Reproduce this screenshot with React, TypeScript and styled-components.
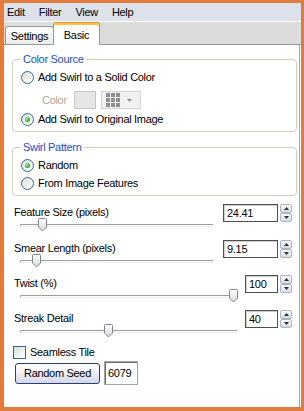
import React, { FC } from 'react';
import styled, { createGlobalStyle, css } from 'styled-components';

const GlobalStyle = createGlobalStyle`
  html, body {
    margin: 0;
    padding: 0;
  }
  body {
    background: #e27b3c;
    font-family: "Liberation Sans", Arial, sans-serif;
    font-size: 11px;
    letter-spacing: -0.3px;
    color: #000;
  }
`;

const Frame = styled.div`
  width: 304px;
  height: 411px;
  box-sizing: border-box;
  padding: 3px 3px 4px 4px;
  background: #e27b3c;
  display: flex;
`;

const Window = styled.div`
  flex: 1;
  display: flex;
  flex-direction: column;
  background: #fff;
`;

const MenuBar = styled.div`
  height: 18px;
  display: flex;
  align-items: center;
  gap: 14px;
  padding-left: 3px;
  background: #dce1ea;
  border-bottom: 1px solid #fff;
`;

const TabStrip = styled.div`
  height: 22px;
  display: flex;
  align-items: flex-end;
  padding-left: 1px;
  background: #dcdcdc;
  border-bottom: 1px solid #919b9c;
`;

const Tab = styled.div<{ $active?: boolean; $w: number }>`
  box-sizing: border-box;
  width: ${(p) => p.$w}px;
  display: flex;
  align-items: center;
  justify-content: center;
  border: 1px solid #919b9c;
  border-bottom: none;
  border-radius: 3px 3px 0 0;
  ${(p) =>
    p.$active
      ? css`
          height: 23px;
          margin-bottom: -1px;
          margin-left: -1px;
          background: #fff;
          border-top: 1px solid #e68b2c;
          box-shadow: inset 0 2px 0 #ffc83c;
          padding-top: 1px;
          position: relative;
          z-index: 1;
        `
      : css`
          height: 18px;
          background: linear-gradient(#fefefe, #ececea);
        `}
`;

const Panel = styled.div`
  flex: 1;
  display: flex;
  flex-direction: column;
  background: #fff;
  border-right: 1px solid #a7a6aa;
  margin-right: 1px;
  padding-top: 8px;
`;

const Group = styled.fieldset<{ $gap?: number }>`
  margin: ${(p) => p.$gap ?? 0}px 2px 0 8px;
  padding: 0 8px 3px 8px;
  border: 1px solid #d0d0bf;
  border-radius: 4px;
  min-width: 0;
`;

const Legend = styled.legend`
  color: #1a4fc4;
  padding: 0 2px;
  line-height: 13px;
`;

const OptionRow = styled.label<{ $top?: number }>`
  display: flex;
  align-items: center;
  gap: 4px;
  height: 18px;
  margin-top: ${(p) => p.$top ?? 0}px;
`;

const Radio = styled.span<{ $checked?: boolean }>`
  width: 13px;
  height: 13px;
  box-sizing: border-box;
  border-radius: 50%;
  border: 1px solid #3b6790;
  background: linear-gradient(135deg, #d8d8d2 0%, #f2f2ef 55%, #fff 100%);
  display: flex;
  align-items: center;
  justify-content: center;
  flex-shrink: 0;
  &::after {
    content: '';
    display: ${(p) => (p.$checked ? 'block' : 'none')};
    width: 5px;
    height: 5px;
    border-radius: 50%;
    background: radial-gradient(circle at 35% 35%, #9ef09a, #21a121 75%);
  }
`;

const Check = styled.span`
  width: 13px;
  height: 13px;
  box-sizing: border-box;
  border: 1px solid #3b6790;
  background: linear-gradient(135deg, #d8d8d2 0%, #f2f2ef 55%, #fff 100%);
  flex-shrink: 0;
`;

const ColorRow = styled.div`
  display: flex;
  align-items: center;
  height: 18px;
  margin-top: 5px;
  padding-left: 21px;
`;

const DimLabel = styled.span`
  color: #aca899;
  margin-right: 7px;
`;

const Swatch = styled.div`
  width: 22px;
  height: 18px;
  box-sizing: border-box;
  border: 1px solid #c8c8c8;
  background: #e6e6e6;
  margin-right: 5px;
`;

const PaletteButton = styled.div`
  width: 40px;
  height: 18px;
  box-sizing: border-box;
  border: 1px solid #d2d2d2;
  background: #f1f1f1;
  display: flex;
  align-items: center;
  gap: 7px;
  padding-left: 4px;
`;

const SliderRow = styled.div<{ $top: number }>`
  display: grid;
  grid-template-columns: 1fr auto;
  grid-template-rows: 18px 14px;
  padding: 0 7px 0 10px;
  margin-top: ${(p) => p.$top}px;
`;

const RowLabel = styled.span`
  align-self: center;
  margin-top: -2px;
`;

const Spin = styled.div`
  display: flex;
  gap: 2px;
`;

const NumBox = styled.div<{ $w: number }>`
  box-sizing: border-box;
  width: ${(p) => p.$w}px;
  height: 18px;
  border: 1px solid #4e4e4e;
  box-shadow: inset 1px 1px 0 #cfcfcf;
  padding-left: 3px;
  display: flex;
  align-items: center;
  background: #fff;
`;

const SpinButtons = styled.div`
  display: flex;
  flex-direction: column;
  width: 12px;
  height: 18px;
`;

const SpinHalf = styled.div`
  flex: 1;
  box-sizing: border-box;
  border: 1px solid #a9b5c9;
  border-radius: 2px;
  background: linear-gradient(#fdfdfe, #d5dbe6);
  display: flex;
  align-items: center;
  justify-content: center;
`;

const Slider = styled.div<{ $end: number }>`
  position: relative;
  margin: 0 ${(p) => p.$end}px 0 6px;
`;

const TrackLine = styled.div`
  margin-top: 2px;
  height: 1px;
  border-top: 1px solid #9c9c9c;
  border-left: 1px solid #9c9c9c;
  border-bottom: 1px solid #ececec;
  border-radius: 2px 0 0 2px;
`;

const Thumb = styled.svg`
  position: absolute;
  top: -4px;
`;

const CheckRow = styled.label`
  display: flex;
  align-items: center;
  gap: 4px;
  height: 18px;
  margin-top: 1px;
  padding-left: 9px;
`;

const ButtonRow = styled.div`
  display: flex;
  align-items: center;
  gap: 4px;
  height: 24px;
  margin-top: 0;
  padding-left: 11px;
`;

const PushButton = styled.button`
  width: 85px;
  height: 21px;
  box-sizing: border-box;
  border: 1px solid #2b3f6e;
  border-radius: 3px;
  background: linear-gradient(#ffffff 0%, #f1f1f6 45%, #d3d5ea 100%);
  font: inherit;
  letter-spacing: inherit;
  color: #000;
  padding: 0;
`;

const SeedBox = styled.div`
  box-sizing: border-box;
  width: 34px;
  height: 24px;
  border: 1px solid #a5a5a5;
  box-shadow: inset 1px 1px 0 #6f6f6f;
  padding-left: 3px;
  display: flex;
  align-items: center;
`;

const Arrow: FC<{ up?: boolean; color?: string }> = ({ up, color = '#2c2c2c' }) => (
  <svg width="5" height="3" viewBox="0 0 5 3">
    <path d={up ? 'M0 3 L2.5 0 L5 3 Z' : 'M0 0 L5 0 L2.5 3 Z'} fill={color} />
  </svg>
);

const GridIcon: FC = () => (
  <svg width="14" height="14" viewBox="0 0 14 14">
    {[0, 5, 10].map((y) =>
      [0, 5, 10].map((x) => (
        <rect key={`${x}-${y}`} x={x} y={y} width="4" height="4" fill="#8e8e8e" />
      ))
    )}
  </svg>
);

type SliderProps = {
  label: string;
  value: string;
  pos: number;
  wide?: boolean;
  top: number;
};

const SliderField: FC<SliderProps> = ({ label, value, pos, wide, top }) => (
  <SliderRow $top={top}>
    <RowLabel>{label}</RowLabel>
    <Spin>
      <NumBox $w={wide ? 55 : 33}>{value}</NumBox>
      <SpinButtons>
        <SpinHalf>
          <Arrow up />
        </SpinHalf>
        <SpinHalf>
          <Arrow />
        </SpinHalf>
      </SpinButtons>
    </Spin>
    <Slider $end={wide ? 10 : 8}>
      <TrackLine />
      <Thumb
        width="9"
        height="14"
        viewBox="0 0 9 14"
        style={{ left: `calc(${pos} * (100% - 8px))` }}
      >
        <defs>
          <linearGradient id="thumbFill" x1="0" y1="0" x2="0" y2="1">
            <stop offset="0" stopColor="#ffffff" />
            <stop offset="1" stopColor="#d8d8d8" />
          </linearGradient>
        </defs>
        <path
          d="M1.5 0.5 H7.5 Q8.5 0.5 8.5 1.5 V9 L4.5 13 L0.5 9 V1.5 Q0.5 0.5 1.5 0.5 Z"
          fill="url(#thumbFill)"
          stroke="#7d8791"
        />
      </Thumb>
    </Slider>
  </SliderRow>
);

const App: FC = () => {
  return (
    <Frame>
      <GlobalStyle />
      <Window>
        <MenuBar>
          <span>Edit</span>
          <span>Filter</span>
          <span>View</span>
          <span>Help</span>
        </MenuBar>
        <TabStrip>
          <Tab $w={49}>Settings</Tab>
          <Tab $w={47} $active>
            Basic
          </Tab>
        </TabStrip>
        <Panel>
          <Group>
            <Legend>Color Source</Legend>
            <OptionRow $top={2}>
              <Radio />
              Add Swirl to a Solid Color
            </OptionRow>
            <ColorRow>
              <DimLabel>Color</DimLabel>
              <Swatch />
              <PaletteButton>
                <GridIcon />
                <Arrow color="#8e8e8e" />
              </PaletteButton>
            </ColorRow>
            <OptionRow $top={1}>
              <Radio $checked />
              Add Swirl to Original Image
            </OptionRow>
          </Group>
          <Group $gap={9}>
            <Legend>Swirl Pattern</Legend>
            <OptionRow $top={2}>
              <Radio $checked />
              Random
            </OptionRow>
            <OptionRow>
              <Radio />
              From Image Features
            </OptionRow>
          </Group>
          <SliderField label="Feature Size (pixels)" value="24.41" pos={0.097} wide top={8} />
          <SliderField label="Smear Length (pixels)" value="9.15" pos={0.065} wide top={4} />
          <SliderField label="Twist (%)" value="100" pos={1} top={3} />
          <SliderField label="Streak Detail" value="40" pos={0.4} top={3} />
          <CheckRow>
            <Check />
            Seamless Tile
          </CheckRow>
          <ButtonRow>
            <PushButton>Random Seed</PushButton>
            <SeedBox>6079</SeedBox>
          </ButtonRow>
        </Panel>
      </Window>
    </Frame>
  );
};

export default App;
